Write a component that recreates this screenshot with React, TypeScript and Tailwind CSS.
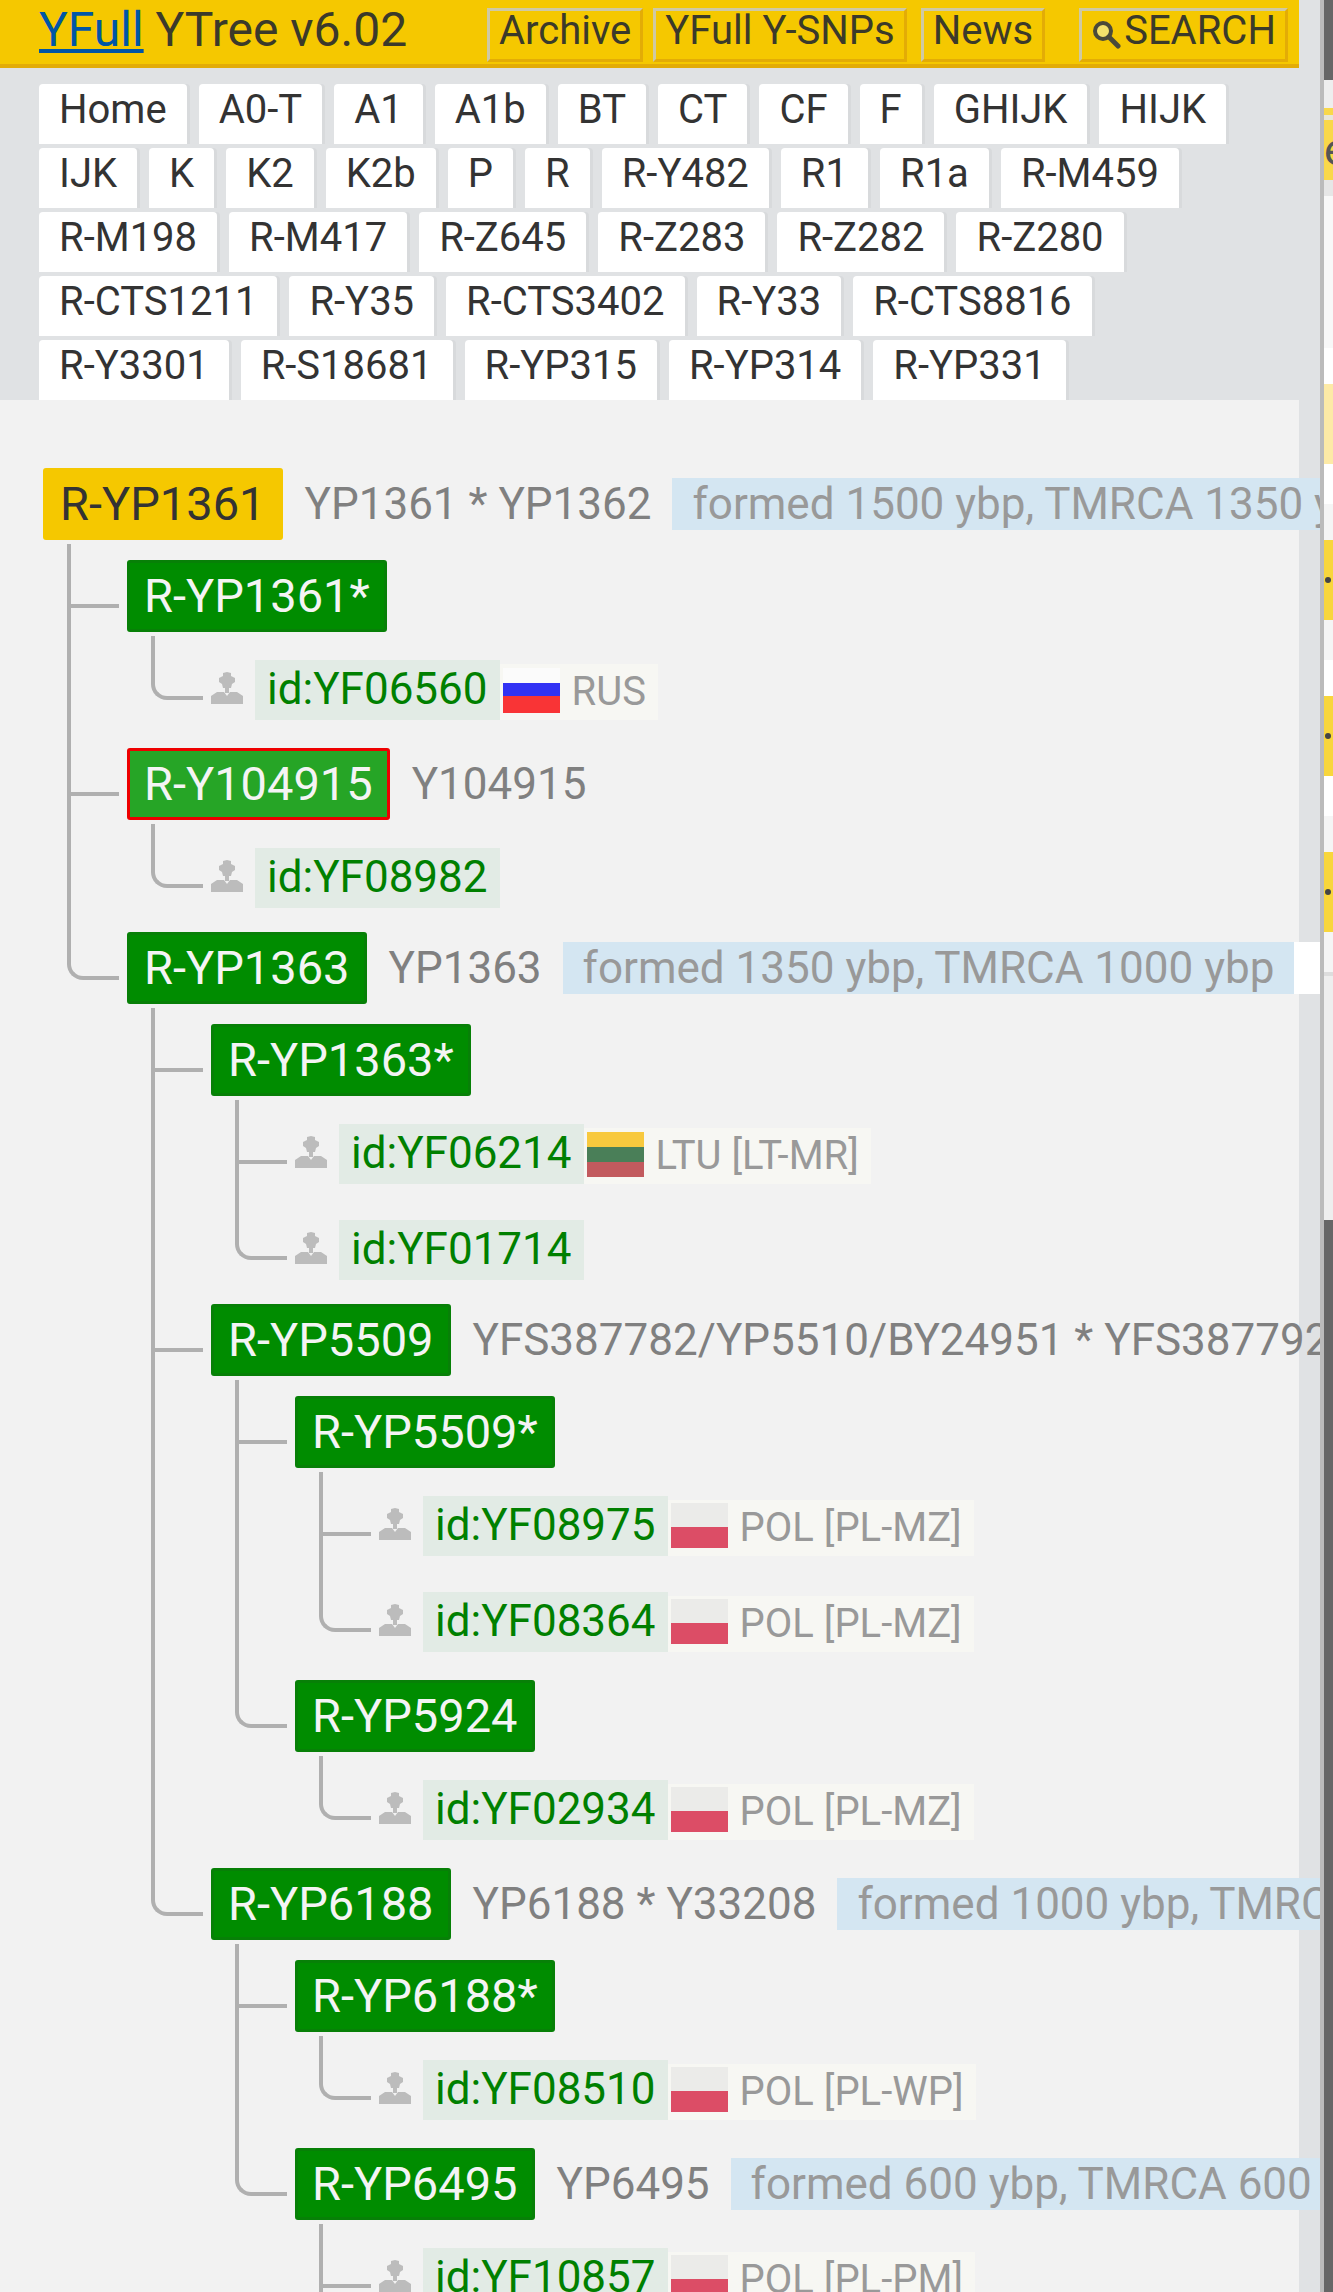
const navItems = [
  "Home", "A0-T", "A1", "A1b", "BT", "CT", "CF", "F", "GHIJK", "HIJK",
  "IJK", "K", "K2", "K2b", "P", "R", "R-Y482", "R1", "R1a", "R-M459",
  "R-M198", "R-M417", "R-Z645", "R-Z283", "R-Z282", "R-Z280",
  "R-CTS1211", "R-Y35", "R-CTS3402", "R-Y33", "R-CTS8816",
  "R-Y3301", "R-S18681", "R-YP315", "R-YP314", "R-YP331",
];

type Flag = "ru" | "lt" | "pl";

interface Sample {
  id: string;
  flag?: Flag;
  place?: string;
}

interface Branch {
  name: string;
  snp?: string;
  age?: string;
  info?: boolean;
  kind?: "root" | "current";
  more?: boolean;
  items?: Item[];
}

type Item = Branch | Sample;

const tree: Branch = {
  name: "R-YP1361",
  kind: "root",
  snp: "YP1361 * YP1362",
  age: "formed 1500 ybp, TMRCA 1350 ybp",
  items: [
    { name: "R-YP1361*", items: [{ id: "id:YF06560", flag: "ru", place: "RUS" }] },
    { name: "R-Y104915", kind: "current", snp: "Y104915", items: [{ id: "id:YF08982" }] },
    {
      name: "R-YP1363",
      snp: "YP1363",
      age: "formed 1350 ybp, TMRCA 1000 ybp",
      info: true,
      items: [
        {
          name: "R-YP1363*",
          items: [
            { id: "id:YF06214", flag: "lt", place: "LTU [LT-MR]" },
            { id: "id:YF01714" },
          ],
        },
        {
          name: "R-YP5509",
          snp: "YFS387782/YP5510/BY24951 * YFS387792",
          items: [
            {
              name: "R-YP5509*",
              items: [
                { id: "id:YF08975", flag: "pl", place: "POL [PL-MZ]" },
                { id: "id:YF08364", flag: "pl", place: "POL [PL-MZ]" },
              ],
            },
            { name: "R-YP5924", items: [{ id: "id:YF02934", flag: "pl", place: "POL [PL-MZ]" }] },
          ],
        },
        {
          name: "R-YP6188",
          snp: "YP6188 * Y33208",
          age: "formed 1000 ybp, TMRCA 600 ybp",
          items: [
            { name: "R-YP6188*", items: [{ id: "id:YF08510", flag: "pl", place: "POL [PL-WP]" }] },
            {
              name: "R-YP6495",
              snp: "YP6495",
              age: "formed 600 ybp, TMRCA 600 ybp",
              more: true,
              items: [{ id: "id:YF10857", flag: "pl", place: "POL [PL-PM]" }],
            },
          ],
        },
      ],
    },
  ],
};

function isSample(item: Item): item is Sample {
  return "id" in item;
}

function FlagIcon({ flag }: { flag: Flag }) {
  if (flag === "ru") {
    return (
      <div className="mx-[3px] mt-1 flex h-[45px] w-[57px] shrink-0 flex-col">
        <div className="h-[15px] bg-[#fbfbfb]" />
        <div className="h-[13px] bg-[#3232f4]" />
        <div className="flex-1 bg-[#f93436]" />
      </div>
    );
  }
  if (flag === "lt") {
    return (
      <div className="mx-[3px] mt-1 flex h-[45px] w-[57px] shrink-0 flex-col">
        <div className="h-[15px] bg-[#f8c93e]" />
        <div className="h-[15px] bg-[#4a7f58]" />
        <div className="flex-1 bg-[#c25a5e]" />
      </div>
    );
  }
  return (
    <div className="mx-[3px] mt-[3px] flex h-[45px] w-[57px] shrink-0 flex-col">
      <div className="h-[24px] bg-[#ebebe9]" />
      <div className="flex-1 bg-[#dc4d66]" />
    </div>
  );
}

function PersonIcon() {
  return (
    <svg viewBox="0 0 32 32" className="mt-3 h-8 w-8 shrink-0" fill="#bcbcbc">
      <path d="M16 0 L20 1 L20 4 L24 6 L24 10 L21 12 L20 16 L12 16 L11 12 L8 10 L8 6 L12 4 L12 1 Z" />
      <path d="M14 16 H18 V21 H14 Z" />
      <path d="M0 32 L0 24 L6 20 L13 20 L16 24 L19 20 L26 20 L32 24 L32 32 Z" />
    </svg>
  );
}

function Connector({ first, last, more }: { first: boolean; last: boolean; more?: boolean }) {
  if (last && !more) {
    return (
      <span
        className={
          first
            ? "absolute top-1 left-[-60px] h-[64px] w-[52px] rounded-bl-[16px] border-b-4 border-l-4 border-[#b0b0b0]"
            : "absolute top-0 left-[-60px] h-[72px] w-[52px] rounded-bl-[16px] border-b-4 border-l-4 border-[#b0b0b0]"
        }
      />
    );
  }
  return (
    <>
      <span
        className={
          first
            ? "absolute top-1 bottom-0 left-[-60px] w-1 bg-[#b0b0b0]"
            : "absolute top-0 bottom-0 left-[-60px] w-1 bg-[#b0b0b0]"
        }
      />
      <span
        className={
          first
            ? "absolute top-[64px] left-[-60px] h-1 w-[52px] bg-[#b0b0b0]"
            : "absolute top-[68px] left-[-60px] h-1 w-[52px] bg-[#b0b0b0]"
        }
      />
    </>
  );
}

function SampleRow({ sample }: { sample: Sample }) {
  return (
    <div className={sample.flag ? "flex items-start pb-1" : "flex items-start"}>
      <PersonIcon />
      <div className="ml-3 flex h-[60px] items-center bg-[#e2ebe5] px-3 pb-[2px] text-[44px] text-[#008000]">
        {sample.id}
      </div>
      {sample.flag && (
        <div className="mt-1 flex h-14 items-start bg-[#f7f7f3] pr-3 text-[40px] leading-[56px] text-[#999999]">
          <FlagIcon flag={sample.flag} />
          <span className="ml-[9px]">{sample.place}</span>
        </div>
      )}
    </div>
  );
}

function BranchRow({ branch }: { branch: Branch }) {
  return (
    <div className="flex h-[72px] items-center whitespace-nowrap">
      {branch.kind === "root" && (
        <div className="flex h-[72px] shrink-0 items-center rounded-[3px] bg-[#f5c800] px-[17px] text-[47px] text-[#333333]">
          {branch.name}
        </div>
      )}
      {branch.kind === "current" && (
        <div className="flex h-[72px] shrink-0 items-center rounded-[3px] border-[3px] border-[#ee0000] bg-[#26a526] px-[14px] text-[47px] text-[#f4f4f4]">
          {branch.name}
        </div>
      )}
      {!branch.kind && (
        <div className="flex h-[72px] shrink-0 items-center rounded-[3px] border-[3px] border-[#078007] bg-[#008c00] px-[14px] text-[47px] text-[#f4f4f4]">
          {branch.name}
        </div>
      )}
      {branch.snp && <span className="ml-[22px] shrink-0 text-[44px] text-[#808080]">{branch.snp}</span>}
      {branch.age && (
        <span className="ml-[21px] flex h-[52px] shrink-0 items-center bg-[#d4e6f2] px-5 text-[44px] text-[#999999]">
          {branch.age}
        </span>
      )}
      {branch.info && (
        <span className="flex h-[52px] w-[60px] shrink-0 items-center bg-white pl-[23px] text-[44px] text-[#999999]">
          i
        </span>
      )}
    </div>
  );
}

function TreeList({ items, more }: { items: Item[]; more?: boolean }) {
  return (
    <ul className="ml-[84px]">
      {items.map((item, i) => {
        const first = i === 0;
        const last = i === items.length - 1;
        if (isSample(item)) {
          return (
            <li key={item.id} className={first ? "relative pt-7" : "relative pt-8"}>
              <Connector first={first} last={last} more={more} />
              <SampleRow sample={item} />
            </li>
          );
        }
        return (
          <li key={item.name} className={first ? "relative pt-5" : "relative pt-6"}>
            <Connector first={first} last={last} />
            <BranchRow branch={item} />
            {item.items && <TreeList items={item.items} more={item.more} />}
          </li>
        );
      })}
    </ul>
  );
}

function HeaderButton({ children, className }: { children: React.ReactNode; className?: string }) {
  return (
    <a
      className={`flex h-[54px] items-start border-[3px] border-t-[#cfc9a4] border-r-[#e3ac06] border-b-[#e3ac06] border-l-[#cfc9a4] px-[9px] text-[40px] leading-[40px] text-[#3b3a2a] ${className ?? ""}`}
    >
      {children}
    </a>
  );
}

function SearchIcon() {
  return (
    <svg viewBox="0 0 30 30" className="mt-2 mr-[3px] h-[30px] w-[30px] shrink-0">
      <circle cx="12" cy="12" r="8" fill="#f3e26c" stroke="#4a4a3a" strokeWidth="4" />
      <path d="M18 18 L27 27" stroke="#4a4a3a" strokeWidth="5" strokeLinecap="round" />
    </svg>
  );
}

function Header() {
  return (
    <header className="flex h-[68px] items-start border-b-4 border-[#e3ac06] bg-[#f5c800] pt-2 pl-[39px] whitespace-nowrap">
      <h1 className="-mt-2 w-[448px] shrink-0 text-[48px] leading-[60px] font-normal text-[#3b3a2a]">
        <a className="text-[#0056a6] underline">YFull</a> YTree v6.02
      </h1>
      <HeaderButton>Archive</HeaderButton>
      <HeaderButton className="ml-[10px]">YFull Y-SNPs</HeaderButton>
      <HeaderButton className="ml-[14px]">News</HeaderButton>
      <HeaderButton className="ml-[34px]">
        <SearchIcon />
        SEARCH
      </HeaderButton>
    </header>
  );
}

function Nav() {
  return (
    <nav className="flex flex-wrap gap-x-3 gap-y-1 pt-4 pr-8 pl-[39px]">
      {navItems.map((name) => (
        <a
          key={name}
          className="h-[60px] rounded-t-[4px] bg-white px-5 text-[40px] leading-[52px] text-[#333333] shadow-[3px_0_0_#d8dadc]"
        >
          {name}
        </a>
      ))}
    </nav>
  );
}

function Dot({ className }: { className: string }) {
  return (
    <div className={className}>
      <span className="ml-[1px] h-[6px] w-[6px] rounded-full bg-[#444444]" />
    </div>
  );
}

function SidePane() {
  return (
    <aside className="flex h-full flex-1 flex-col overflow-hidden bg-[#666666]">
      <div className="h-[80px] bg-[#666666]" />
      <div className="h-[28px] bg-[#eeeeee]" />
      <div className="h-[7px] bg-[#f9d84a]" />
      <div className="h-[5px] bg-[#e8e6d8]" />
      <div className="flex h-[60px] items-center overflow-hidden bg-[#f9d84a] text-[44px] text-[#555555]">e</div>
      <div className="h-[16px] bg-[#e6e6e6]" />
      <div className="h-[152px] bg-[#f8f8f8]" />
      <div className="h-[36px] bg-white" />
      <div className="h-[80px] bg-[#fdeaa6]" />
      <div className="h-[40px] bg-white" />
      <div className="h-[36px] bg-[#f5f5f5]" />
      <Dot className="flex h-[80px] items-center bg-[#f8d63c]" />
      <div className="h-[40px] bg-[#f5f5f5]" />
      <div className="h-[36px] bg-white" />
      <Dot className="flex h-[80px] items-center bg-[#f8d63c]" />
      <div className="h-[40px] bg-white" />
      <div className="h-[36px] bg-[#f5f5f5]" />
      <Dot className="flex h-[80px] items-center bg-[#f8d63c]" />
      <div className="h-[40px] bg-[#f5f5f5]" />
      <div className="h-[4px] bg-[#dddddd]" />
      <div className="h-[244px] bg-[#eeeeee]" />
    </aside>
  );
}

export default function App() {
  return (
    <div className="flex h-[2292px] w-[1333px] overflow-hidden bg-[#e0e2e4] font-['Roboto',sans-serif]">
      <div className="h-full w-[1320px] shrink-0 overflow-hidden">
        <div className="w-[1299px]">
          <Header />
          <Nav />
          <main className="mt-0 h-[1892px] bg-[#f2f2f2] pt-[68px] pl-[43px]">
            <BranchRow branch={tree} />
            <TreeList items={tree.items ?? []} />
          </main>
        </div>
      </div>
      <div className="h-full w-1 shrink-0 bg-[#bbbbbb]" />
      <SidePane />
    </div>
  );
}
